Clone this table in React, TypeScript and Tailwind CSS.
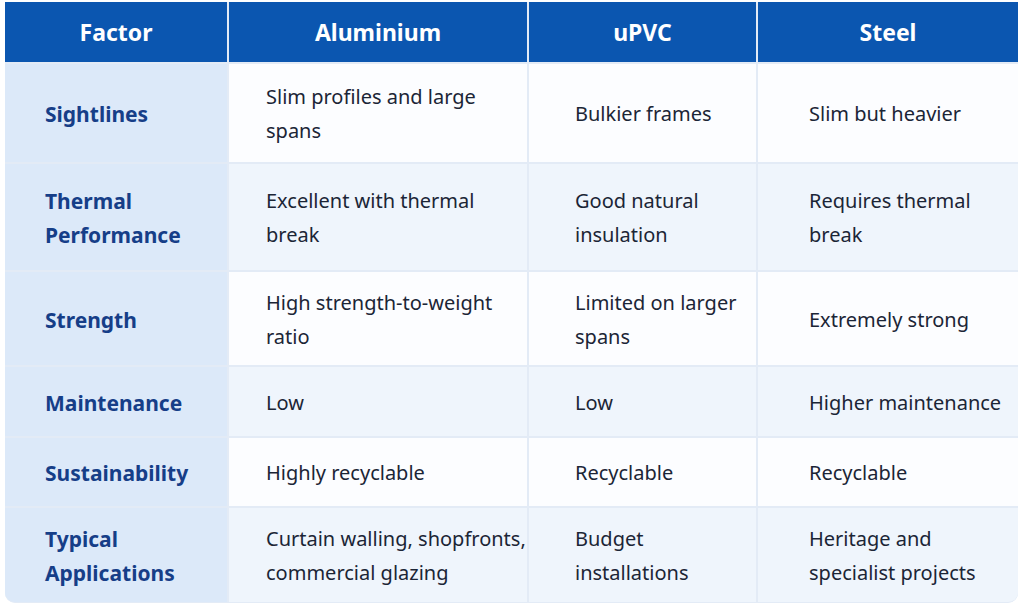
const headers = ["Factor", "Aluminium", "uPVC", "Steel"];

const rows: { factor: string[]; values: string[][] }[] = [
  {
    factor: ["Sightlines"],
    values: [["Slim profiles and large", "spans"], ["Bulkier frames"], ["Slim but heavier"]],
  },
  {
    factor: ["Thermal", "Performance"],
    values: [
      ["Excellent with thermal", "break"],
      ["Good natural", "insulation"],
      ["Requires thermal", "break"],
    ],
  },
  {
    factor: ["Strength"],
    values: [
      ["High strength-to-weight", "ratio"],
      ["Limited on larger", "spans"],
      ["Extremely strong"],
    ],
  },
  {
    factor: ["Maintenance"],
    values: [["Low"], ["Low"], ["Higher maintenance"]],
  },
  {
    factor: ["Sustainability"],
    values: [["Highly recyclable"], ["Recyclable"], ["Recyclable"]],
  },
  {
    factor: ["Typical", "Applications"],
    values: [
      ["Curtain walling, shopfronts,", "commercial glazing"],
      ["Budget", "installations"],
      ["Heritage and", "specialist projects"],
    ],
  },
];

// left padding per value column, taken from the picture
const padClass = ["pl-[37px]", "pl-[46px]", "pl-[51px]"];

export default function App() {
  return (
    <div className="w-[1024px] h-[608px] bg-white pt-[2px] pl-[5px] font-['Noto_Sans',sans-serif]">
      <div className="w-[1013px] grid grid-cols-[222px_298px_227px_260px] grid-rows-[60px_98px_106px_93px_69px_68px_94px] gap-[2px] bg-[#e3ebf6] rounded-b-[10px] overflow-hidden border-b border-[#e3ebf6]">
        {headers.map((h) => (
          <div
            key={h}
            className="bg-[#0b56b0] text-white font-bold text-[23px] flex items-center justify-center"
          >
            {h}
          </div>
        ))}
        {rows.map((row, i) => {
          const rowBg = i % 2 === 0 ? "bg-[#fcfdff]" : "bg-[#eff5fc]";
          return [
            <div
              key={`f${i}`}
              className="bg-[#dce9f9] pl-[40px] pt-[2px] flex flex-col justify-center text-[#163e88] font-bold text-[21px] leading-[34px] whitespace-nowrap"
            >
              {row.factor.map((line) => (
                <span key={line}>{line}</span>
              ))}
            </div>,
            ...row.values.map((v, j) => (
              <div
                key={`v${i}-${j}`}
                className={`${rowBg} ${padClass[j]} pt-[2px] flex flex-col justify-center text-[#1b2536] text-[20px] leading-[34px] whitespace-nowrap`}
              >
                {v.map((line) => (
                  <span key={line}>{line}</span>
                ))}
              </div>
            )),
          ];
        })}
      </div>
    </div>
  );
}
